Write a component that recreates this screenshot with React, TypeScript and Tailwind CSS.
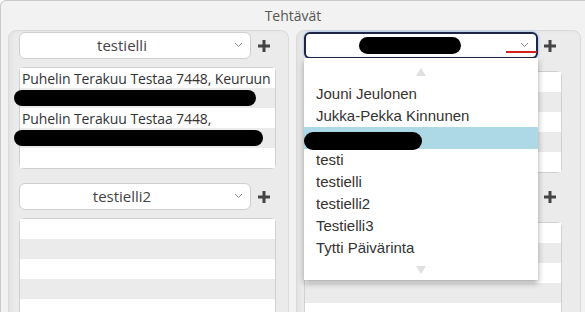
import React from "react";

const Plus = () => (
  <svg width="12" height="12" viewBox="0 0 12 12">
    <rect x="4.5" y="0" width="3" height="12" fill="#444" />
    <rect x="0" y="4.5" width="12" height="3" fill="#444" />
  </svg>
);

const Chevron = () => (
  <svg width="9" height="6" viewBox="0 0 9 6">
    <polyline points="1,1 4.5,4.5 8,1" fill="none" stroke="#888" strokeWidth="1" />
  </svg>
);

const Select = ({ label }: { label: string }) => (
  <div className="relative w-[232px] h-[27px] bg-white border border-[#cfcfcf] rounded-[6px] flex items-center justify-center pr-[26px] text-[15px] text-[#444]">
    <span style={{ fontFamily: '"Open Sans", sans-serif' }}>{label}</span>
    <div className="absolute right-[7px] top-[9px]">
      <Chevron />
    </div>
  </div>
);

const List = ({ rows, w, children }: { rows: number; w: string; children?: React.ReactNode[] }) => (
  <div className={`${w} bg-white border border-[#d0d0d0] rounded-[5px] overflow-visible`}>
    {Array.from({ length: rows }).map((_, i) => (
      <div key={i} className={`h-[20px] flex items-center ${i % 2 === 1 ? "bg-[#ebebeb]" : "bg-white"}`}>
        {children ? children[i] : null}
      </div>
    ))}
  </div>
);

const ItemText = ({ t }: { t: string }) => (
  <span className="pl-[2px] whitespace-nowrap text-[14px] tracking-[-0.1px] text-[#333]" style={{ fontFamily: '"Open Sans", sans-serif' }}>
    {t}
  </span>
);

const Redact = ({ w, ml }: { w: string; ml: string }) => (
  <div className={`${w} ${ml} h-[16px] rounded-full bg-black`} />
);

export default function App() {
  const items = ["Jouni Jeulonen", "Jukka-Pekka Kinnunen", "", "testi", "testielli", "testielli2", "Testielli3", "Tytti Päivärinta"];
  return (
    <div className="w-[585px] h-[312px] overflow-hidden bg-[#f2f2f2] border-t border-l border-[#c9c9c9] rounded-tl-[6px]">
      <div className="h-[29px] flex items-center justify-center text-[14px] text-[#555]" style={{ fontFamily: '"Open Sans", sans-serif' }}>
        Tehtävät
      </div>
      <div className="flex gap-[7px] pl-[7px]">
        {/* left panel */}
        <div className="w-[281px] h-[300px] bg-[#ebebeb] border border-[#dadada] rounded-t-[8px] pt-[1px] pl-[10px] shadow-[inset_3px_0_4px_rgba(0,0,0,0.04)]">
          <div className="flex items-center">
            <Select label="testielli" />
            <div className="w-[25px] flex justify-center">
              <Plus />
            </div>
          </div>
          <div className="mt-[8px]">
            <List
              rows={5}
              w="w-[257px]"
              children={[
                <ItemText key="a" t="Puhelin Terakuu Testaa 7448, Keuruun" />,
                <Redact key="b" w="w-[242px]" ml="-ml-[6px]" />,
                <ItemText key="c" t="Puhelin Terakuu Testaa 7448," />,
                <Redact key="d" w="w-[249px]" ml="-ml-[6px]" />,
                null,
              ]}
            />
          </div>
          <div className="flex items-center mt-[14px]">
            <Select label="testielli2" />
            <div className="w-[25px] flex justify-center">
              <Plus />
            </div>
          </div>
          <div className="mt-[8px]">
            <List rows={5} w="w-[257px]" />
          </div>
        </div>
        {/* right panel */}
        <div className="w-[285px] h-[300px] bg-[#ebebeb] border border-[#dadada] rounded-t-[8px] pt-[1px] pl-[7px] shadow-[inset_3px_0_4px_rgba(0,0,0,0.04)]">
          <div className="flex items-center">
            <div className="relative">
              <div className="relative w-[234px] h-[27px] bg-white border-2 border-[#1d2646] rounded-[6px] shadow-[0_0_3px_#7aa7e0]">
                <div className="absolute left-[53px] top-[3px] w-[102px] h-[17px] rounded-full bg-black" />
                <div className="absolute right-[7px] top-[8px]">
                  <Chevron />
                </div>
                <div className="absolute right-[-1px] top-[17px] w-[31px] h-[2px] bg-[#d42020]" />
              </div>
              <div className="absolute left-0 top-[26px] w-[234px] h-[222px] bg-white shadow-[0_3px_6px_rgba(0,0,0,0.35)] z-10" style={{ fontFamily: '"Liberation Sans", Arial, sans-serif' }}>
                <div className="h-[25px] flex items-center justify-center pt-[3px]">
                  <svg width="10" height="8" viewBox="0 0 10 8">
                    <polygon points="5,0 10,8 0,8" fill="#e0e0e0" />
                  </svg>
                </div>
                {items.map((t, i) =>
                  i === 2 ? (
                    <div key={i} className="h-[22px] bg-[#add8e6] flex items-end">
                      <div className="w-[118px] h-[18px] rounded-full bg-black mb-[-1px]" />
                    </div>
                  ) : (
                    <div key={i} className="h-[22px] flex items-center pl-[12px] pt-[1px] text-[15px] text-[#333]">
                      {t}
                    </div>
                  )
                )}
                <div className="h-[21px] flex items-center justify-center">
                  <svg width="10" height="8" viewBox="0 0 10 8">
                    <polygon points="0,0 10,0 5,8" fill="#e0e0e0" />
                  </svg>
                </div>
              </div>
            </div>
            <div className="w-[24px] flex justify-center">
              <Plus />
            </div>
          </div>
          <div className="mt-[12px]">
            <List rows={5} w="w-[258px]" />
          </div>
          <div className="flex items-center mt-[10px]">
            <div className="w-[234px] h-[27px] bg-white border border-[#cfcfcf] rounded-[6px]" />
            <div className="w-[24px] flex justify-center">
              <Plus />
            </div>
          </div>
          <div className="mt-[12px]">
            <List rows={5} w="w-[258px]" />
          </div>
        </div>
      </div>
    </div>
  );
}
